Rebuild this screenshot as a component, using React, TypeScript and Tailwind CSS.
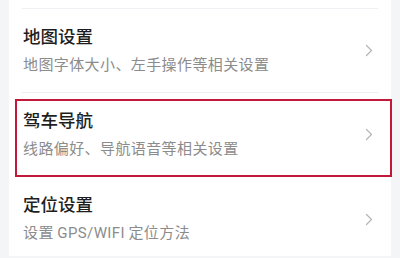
const items = [
  { title: '地图设置', desc: '地图字体大小、左手操作等相关设置' },
  { title: '驾车导航', desc: '线路偏好、导航语音等相关设置', marked: true },
  { title: '定位设置', desc: '设置\u2009GPS/WIFI\u2009定位方法' },
];

function Chevron() {
  return (
    <svg width="8" height="13" viewBox="0 0 8 13" fill="none" className="shrink-0">
      <path d="M1.5 1.5 6.5 6.5 1.5 11.5" stroke="#b4b4b4" strokeWidth="1.2" strokeLinecap="round" strokeLinejoin="round" />
    </svg>
  );
}

export default function App() {
  return (
    <div
      className="h-[258px] w-[400px] overflow-hidden bg-[#f4f5f7] px-[9px] pb-[2px]"
      style={{ fontFamily: 'Roboto, "Noto Sans CJK SC", sans-serif' }}
    >
      <div className="h-full bg-white px-[13px]">
        <div className="h-[9px] border-b border-[#eef0f3]" />
        {items.map((it, i) => (
          <div
            key={it.title}
            className={`relative flex h-[84px] items-center justify-between pl-[1px] pr-[5px] ${i < items.length - 1 ? 'border-b border-[#eef0f3]' : ''}`}
          >
            <div className="flex flex-col pb-[1px]">
              <span className="text-[17.5px] leading-[24px] font-medium text-[#1e1e1e]">{it.title}</span>
              <span className="mt-[5px] text-[15px] leading-[22px] tracking-[0.4px] text-[#8c8c8c]">{it.desc}</span>
            </div>
            <Chevron />
            {it.marked && (
              <div className="pointer-events-none absolute top-[6px] right-[-14px] bottom-[-1px] left-[-7px] border-2 border-[#c2183a]" />
            )}
          </div>
        ))}
      </div>
    </div>
  );
}
